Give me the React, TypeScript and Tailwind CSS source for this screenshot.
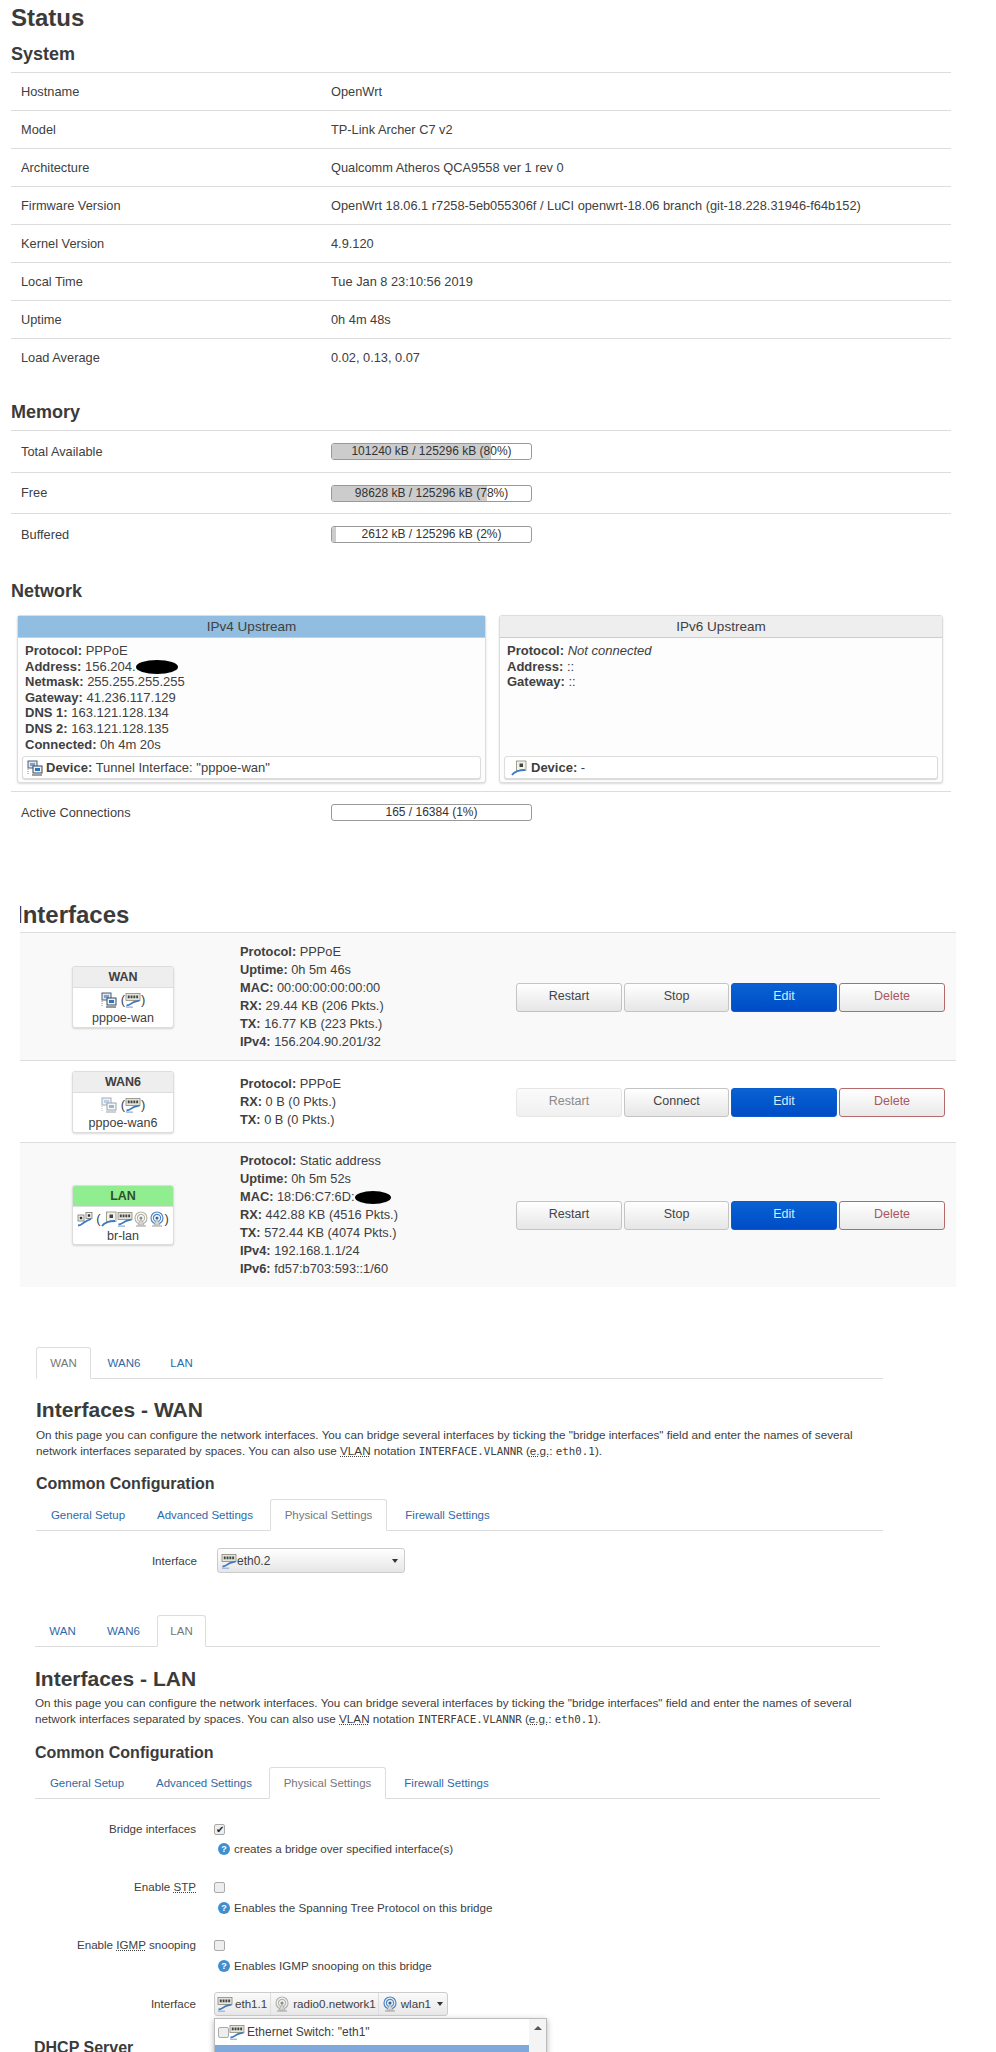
import React from 'react';

const Sw = () => (
  <svg viewBox="0 0 16 16" className="w-4 h-4 shrink-0">
    <rect x="1" y="1.5" width="14" height="7" fill="#e4e4da" stroke="#8a8a7a" strokeWidth="0.8" />
    <path d="M2.8 3.6h1.9v2.6H2.8zM5.6 3.6h1.9v2.6H5.6zM8.4 3.6h1.9v2.6H8.4zM11.2 3.6h1.9v2.6h-1.9z" fill="#444" />
    <path d="M1.5 13.5c3 0 4.5-2 6.5-3s4-1 6.5-2" fill="none" stroke="#3f78bd" strokeWidth="1.8" />
    <path d="M1 15.2h7" stroke="#8fb0d8" strokeWidth="1.2" />
  </svg>
);

const Port = () => (
  <svg viewBox="0 0 16 16" className="w-4 h-4 shrink-0">
    <rect x="5.5" y="1" width="9.5" height="9.5" fill="#f2f2ea" stroke="#8a8a7a" strokeWidth="0.8" />
    <rect x="8.5" y="3.5" width="3.5" height="3.5" fill="#444" />
    <path d="M1 15c2-3 4-3 6-4s3-1 7-1" fill="none" stroke="#3f78bd" strokeWidth="1.8" />
  </svg>
);

const Bridge = () => (
  <svg viewBox="0 0 16 16" className="w-4 h-4 shrink-0">
    <rect x="1" y="4" width="6" height="6" fill="#f2f2ea" stroke="#777" strokeWidth="0.8" />
    <rect x="9" y="1.5" width="6" height="6" fill="#f2f2ea" stroke="#777" strokeWidth="0.8" />
    <rect x="2.8" y="5.8" width="2.4" height="2.4" fill="#333" />
    <rect x="10.8" y="3.3" width="2.4" height="2.4" fill="#333" />
    <path d="M1 14.5c3 0 4-1.500 6-3s3-2 7-3.500" fill="none" stroke="#3f78bd" strokeWidth="1.8" />
  </svg>
);

const Tunnel = ({ faded = false }: { faded?: boolean }) => (
  <svg viewBox="0 0 16 16" className={`w-4 h-4 shrink-0 ${faded ? 'opacity-50' : ''}`}>
    <rect x="1" y="1" width="9" height="7" fill="#dfe6ee" stroke="#4a5c72" />
    <rect x="3" y="3" width="5" height="3" fill="#7fa3c9" />
    <rect x="6" y="6" width="9" height="7" fill="#eef2f6" stroke="#33485f" />
    <rect x="8" y="8" width="5" height="3" fill="#2f73b8" />
    <path d="M5 15h10" stroke="#777" strokeWidth="1.4" />
    <path d="M1 9v6" stroke="#888" strokeDasharray="1 1" />
  </svg>
);

const Wifi = ({ on = false }: { on?: boolean }) => {
  const c = on ? '#4f86c6' : '#b5b5ad';
  return (
    <svg viewBox="0 0 16 16" className="w-4 h-4 shrink-0">
      <circle cx="8" cy="7" r="6" fill="none" stroke={c} strokeWidth="1.2" />
      <circle cx="8" cy="7" r="3.600" fill="none" stroke={c} strokeWidth="1.2" />
      <circle cx="8" cy="7" r="1.600" fill={on ? '#2f66a8' : '#8c8c84'} />
      <path d="M5 14l3-6 3 6z" fill="#d8d8d0" stroke="#999" strokeWidth="0.5" />
      <path d="M3 15h10" stroke="#999" strokeWidth="1" />
    </svg>
  );
};

const Help = () => (
  <span className="w-3 h-3 rounded-full bg-[#3f8fd0] text-white text-[9px] leading-3 text-center font-bold shrink-0">?</span>
);

const Blob = ({ w, h }: { w: string; h: string }) => (
  <span className={`inline-block align-middle bg-black rounded-[50%] ${w} ${h}`} />
);

const Caret = () => <span className="w-0 h-0 shrink-0 border-x-[3px] border-t-[4px] border-x-transparent border-t-[#333]" />;

const sysRows = [
  ['Hostname', 'OpenWrt'],
  ['Model', 'TP-Link Archer C7 v2'],
  ['Architecture', 'Qualcomm Atheros QCA9558 ver 1 rev 0'],
  ['Firmware Version', 'OpenWrt 18.06.1 r7258-5eb055306f / LuCI openwrt-18.06 branch (git-18.228.31946-f64b152)'],
  ['Kernel Version', '4.9.120'],
  ['Local Time', 'Tue Jan 8 23:10:56 2019'],
  ['Uptime', '0h 4m 48s'],
  ['Load Average', '0.02, 0.13, 0.07'],
];

function Bar({ pct, text }: { pct: number; text: string }) {
  return (
    <div className="relative w-[201px] h-[17px] border border-[#999] rounded-[3px] bg-white overflow-hidden text-[12px] leading-[15px] text-center text-[#333]">
      <div className="absolute left-0 top-0 bottom-0 bg-[#ccc]" style={{ width: `${pct}%` }} />
      <span className="relative">{text}</span>
    </div>
  );
}

function BarRow({ label, pct, text, h }: { label: string; pct: number; text: string; h: string }) {
  return (
    <div className={`flex items-center border-t border-[#ddd] ${h}`}>
      <div className="w-[320px] pl-[10px]">{label}</div>
      <Bar pct={pct} text={text} />
    </div>
  );
}

function Upstream({ title, head, children, device, icon, w }: { title: string; head: string; children: React.ReactNode; device: React.ReactNode; icon: React.ReactNode; w: string }) {
  return (
    <div className={`flex flex-col h-[168px] border border-[#ddd] rounded-[3px] shadow-[0_1px_2px_rgba(0,0,0,0.15)] bg-[#fdfdfd] text-[13px] ${w}`}>
      <div className={`h-[22px] shrink-0 border-b border-[#ccc] leading-[21px] text-center text-[13.5px] ${head}`}>{title}</div>
      <div className="flex-1 pl-[7px] pt-[5px] leading-[15.6px]">{children}</div>
      <div className="flex items-center gap-[3px] h-[23px] mx-[4px] mb-[3px] pl-[4px] border border-[#ddd] rounded-[3px] bg-white shadow-[0_1px_1px_rgba(0,0,0,0.15)]">
        {icon}
        <span>{device}</span>
      </div>
    </div>
  );
}

const B = ({ children }: { children: React.ReactNode }) => <b className="font-bold">{children}</b>;

function Btn({ label, kind = 'plain', w = 'w-[106px]' }: { label: string; kind?: 'plain' | 'off' | 'edit' | 'del'; w?: string }) {
  const cls = {
    plain: 'border-[#c4c4c4] bg-gradient-to-b from-white to-[#e6e6e6] text-[#444]',
    off: 'border-[#e6e6e6] bg-gradient-to-b from-[#fbfbfb] to-[#f0f0f0] text-[#8a8a8a]',
    edit: 'border-[#0a5ccc] bg-gradient-to-b from-[#0a62d2] to-[#004cc6] text-[#d6ecff]',
    del: 'border-[#b46a6a] bg-gradient-to-b from-white to-[#e9e9e9] text-[#ad5560]',
  }[kind];
  return <div className={`h-[29px] ${w} border rounded-[3px] text-center leading-[25px] text-[12.5px] ${cls}`}>{label}</div>;
}

function Badge({ title, name, head = 'bg-[#eee] text-[#404040]', h, icons }: { title: string; name: string; head?: string; h: string; icons: React.ReactNode }) {
  return (
    <div className={`flex flex-col w-[102px] border border-[#ddd] rounded-[3px] bg-white shadow-[0_1px_2px_rgba(0,0,0,0.15)] overflow-hidden ${h}`}>
      <div className={`h-[21px] shrink-0 border-b border-[#ddd] text-center font-bold text-[12.5px] leading-[20px] ${head}`}>{title}</div>
      <div className="flex justify-center items-center h-[21px] mt-[2px] text-[13px]">{icons}</div>
      <div className="text-center text-[12.5px] leading-[15px]">{name}</div>
    </div>
  );
}

function IfaceRow({ h, bg = '', badge, lines, stop }: { h: string; bg?: string; badge: React.ReactNode; lines: [string, React.ReactNode][]; stop: 'stop' | 'connect' }) {
  return (
    <div className={`flex items-center border-t border-[#ddd] ${h} ${bg}`}>
      <div className="w-[220px] pl-[52px]">{badge}</div>
      <div className="w-[276px] text-[12.8px] leading-[18px]">
        {lines.map(([k, v]) => (
          <div key={k}><B>{k}:</B> {v}</div>
        ))}
      </div>
      <div className="flex gap-[2px] mt-[1px]">
        <Btn label="Restart" kind={stop === 'connect' ? 'off' : 'plain'} />
        <Btn label={stop === 'connect' ? 'Connect' : 'Stop'} w="w-[105px]" />
        <Btn label="Edit" kind="edit" />
        <Btn label="Delete" kind="del" />
      </div>
    </div>
  );
}

function TabBar({ items, active, className = '' }: { items: [string, string][]; active: string; className?: string }) {
  return (
    <div className={`flex h-[32px] border-b border-[#ddd] text-[11.5px] ${className}`}>
      {items.map(([name, w]) => (
        <div
          key={name}
          className={`${w} h-[32px] shrink-0 text-center ${name === active ? 'leading-[31px] border border-[#ddd] border-b-white rounded-t-[3px] bg-white text-[#777]' : 'leading-[33px] text-[#2f6aa8]'}`}
        >
          {name}
        </div>
      ))}
    </div>
  );
}

const subTabs: [string, string][] = [
  ['General Setup', 'w-[104px]'],
  ['Advanced Settings', 'w-[130px]'],
  ['Physical Settings', 'w-[117px]'],
  ['Firewall Settings', 'w-[121px]'],
];

function Intro({ name, top, gap }: { name: string; top: string; gap: string }) {
  return (
    <>
      <h2 className={`h-[30px] leading-[30px] text-[21px] font-bold text-[#3b3b3b] ${top}`}>Interfaces - {name}</h2>
      <p className={`text-[11.7px] leading-[16px] whitespace-nowrap ${gap}`}>
        On this page you can configure the network interfaces. You can bridge several interfaces by ticking the "bridge interfaces" field and enter the names of several
        <br />
        network interfaces separated by spaces. You can also use <span className="underline decoration-dotted">VLAN</span> notation{' '}
        <code className="font-['DejaVu_Sans_Mono',monospace] text-[10.8px]">INTERFACE.VLANNR</code> (<span className="underline decoration-dotted">e.g.</span>:{' '}
        <code className="font-['DejaVu_Sans_Mono',monospace] text-[10.8px]">eth0.1</code>).
      </p>
    </>
  );
}

function Check({ checked = false }: { checked?: boolean }) {
  return (
    <div className="w-[11px] h-[11px] border border-[#aaa] rounded-[2px] bg-[#eee] text-[#222] text-[10px] leading-[9px] text-center">
      {checked ? '✔' : ''}
    </div>
  );
}

function Flag({ label, help, checked, top, helpTop }: { label: React.ReactNode; help: string; checked?: boolean; top: string; helpTop: string }) {
  return (
    <>
      <div className={`flex items-center h-[20px] ${top}`}>
        <div className="w-[161px] text-right text-[11.6px]">{label}</div>
        <div className="ml-[18px]"><Check checked={checked} /></div>
      </div>
      <div className={`flex items-center gap-[4px] h-[20px] pl-[183px] text-[11.6px] ${helpTop}`}>
        <Help />
        <span>{help}</span>
      </div>
    </>
  );
}

export default function App() {
  return (
    <div className="relative h-[2052px] overflow-hidden bg-white text-[#404040] text-[12.8px] font-['Liberation_Sans',Arial,sans-serif]">
      <div className="ml-[11px] w-[940px]">
        <h1 className="h-[36px] leading-[36px] text-[24px] font-bold text-[#3b3b3b]">Status</h1>
        <h2 className="h-[36px] leading-[36px] text-[18px] font-bold text-[#3b3b3b]">System</h2>
        {sysRows.map(([k, v]) => (
          <div key={k} className="flex items-center h-[38px] pt-[1px] border-t border-[#ddd]">
            <div className="w-[320px] pl-[10px]">{k}</div>
            <div>{v}</div>
          </div>
        ))}

        <h2 className="mt-[18px] h-[36px] leading-[36px] text-[18px] font-bold text-[#3b3b3b]">Memory</h2>
        <BarRow label="Total Available" pct={80} text="101240 kB / 125296 kB (80%)" h="h-[42px]" />
        <BarRow label="Free" pct={78} text="98628 kB / 125296 kB (78%)" h="h-[41px]" />
        <BarRow label="Buffered" pct={2} text="2612 kB / 125296 kB (2%)" h="h-[42px]" />

        <h2 className="mt-[18px] h-[36px] leading-[36px] text-[18px] font-bold text-[#3b3b3b]">Network</h2>
        <div className="flex gap-[13px] mt-[6px] ml-[6px]">
          <Upstream
            title="IPv4 Upstream"
            head="bg-[#90bde0]"
            w="w-[469px]"
            icon={<Tunnel />}
            device={<><B>Device:</B> Tunnel Interface: "pppoe-wan"</>}
          >
            <div><B>Protocol:</B> PPPoE</div>
            <div><B>Address:</B> 156.204.<Blob w="w-[42px]" h="h-[14px]" /></div>
            <div><B>Netmask:</B> 255.255.255.255</div>
            <div><B>Gateway:</B> 41.236.117.129</div>
            <div><B>DNS 1:</B> 163.121.128.134</div>
            <div><B>DNS 2:</B> 163.121.128.135</div>
            <div><B>Connected:</B> 0h 4m 20s</div>
          </Upstream>
          <Upstream
            title="IPv6 Upstream"
            head="bg-[#eee]"
            w="w-[444px]"
            icon={<span className="ml-[2px] mr-[1px]"><Port /></span>}
            device={<><B>Device:</B> -</>}
          >
            <div><B>Protocol:</B> <em>Not connected</em></div>
            <div><B>Address:</B> ::</div>
            <div><B>Gateway:</B> ::</div>
          </Upstream>
        </div>
        <div className="mt-[8px]">
          <BarRow label="Active Connections" pct={0} text="165 / 16384 (1%)" h="h-[42px]" />
        </div>
      </div>

      <div className="ml-[20px] w-[936px] mt-[65px]">
        <div className="h-[34px] overflow-hidden">
          <h2 className="-ml-[4px] leading-[34px] text-[24px] font-bold text-[#3b3b3b]">Interfaces</h2>
        </div>
        <IfaceRow
          h="h-[128px]"
          bg="bg-[#f9f9f9]"
          stop="stop"
          badge={<Badge title="WAN" name="pppoe-wan" h="h-[62px]" icons={<><Tunnel /><span className="ml-[4px]">(</span><Sw /><span>)</span></>} />}
          lines={[
            ['Protocol', 'PPPoE'],
            ['Uptime', '0h 5m 46s'],
            ['MAC', '00:00:00:00:00:00'],
            ['RX', '29.44 KB (206 Pkts.)'],
            ['TX', '16.77 KB (223 Pkts.)'],
            ['IPv4', '156.204.90.201/32'],
          ]}
        />
        <IfaceRow
          h="h-[82px]"
          stop="connect"
          badge={<Badge title="WAN6" name="pppoe-wan6" h="h-[62px]" icons={<><Tunnel faded /><span className="ml-[4px]">(</span><Sw /><span>)</span></>} />}
          lines={[
            ['Protocol', 'PPPoE'],
            ['RX', '0 B (0 Pkts.)'],
            ['TX', '0 B (0 Pkts.)'],
          ]}
        />
        <IfaceRow
          h="h-[145px]"
          bg="bg-[#f9f9f9]"
          stop="stop"
          badge={
            <Badge
              title="LAN"
              name="br-lan"
              head="bg-[#90ee90] text-[#2f4f2f]"
              h="h-[60px]"
              icons={<><Bridge /><span className="ml-[3px]">(</span><Port /><Sw /><Wifi /><Wifi on /><span>)</span></>}
            />
          }
          lines={[
            ['Protocol', 'Static address'],
            ['Uptime', '0h 5m 52s'],
            ['MAC', <>18:D6:C7:6D:<Blob w="w-[36px]" h="h-[13px]" /></>],
            ['RX', '442.88 KB (4516 Pkts.)'],
            ['TX', '572.44 KB (4074 Pkts.)'],
            ['IPv4', '192.168.1.1/24'],
            ['IPv6', 'fd57:b703:593::1/60'],
          ]}
        />
      </div>

      <div className="ml-[36px] w-[847px] mt-[60px]">
        <TabBar items={[['WAN', 'w-[55px]'], ['WAN6', 'w-[66px]'], ['LAN', 'w-[49px]']]} active="WAN" />
        <Intro name="WAN" top="mt-[16px]" gap="mt-[2px]" />
        <h3 className="mt-[12px] h-[24px] leading-[24px] text-[16px] font-bold text-[#3b3b3b]">Common Configuration</h3>
        <TabBar items={subTabs} active="Physical Settings" className="mt-[3px]" />
        <div className="flex items-center mt-[17px]">
          <div className="w-[161px] text-right text-[11.6px]">Interface</div>
          <div className="ml-[20px] flex items-center justify-between w-[188px] h-[25px] pl-[3px] pr-[6px] border border-[#ccc] rounded-[3px] bg-gradient-to-b from-white to-[#e6e6e6] text-[12px]">
            <div className="flex items-center"><Sw />eth0.2</div>
            <Caret />
          </div>
        </div>
      </div>

      <div className="ml-[35px] w-[845px] mt-[42px]">
        <TabBar items={[['WAN', 'w-[55px]'], ['WAN6', 'w-[67px]'], ['LAN', 'w-[49px]']]} active="LAN" />
        <Intro name="LAN" top="mt-[17px]" gap="mt-[1px]" />
        <h3 className="mt-[13px] h-[24px] leading-[24px] text-[16px] font-bold text-[#3b3b3b]">Common Configuration</h3>
        <TabBar items={subTabs} active="Physical Settings" className="mt-[2px]" />
        <Flag label="Bridge interfaces" checked help="creates a bridge over specified interface(s)" top="mt-[20px]" helpTop="" />
        <Flag label={<>Enable <span className="underline decoration-dotted">STP</span></>} help="Enables the Spanning Tree Protocol on this bridge" top="mt-[18px]" helpTop="mt-[1px]" />
        <Flag label={<>Enable <span className="underline decoration-dotted">IGMP</span> snooping</>} help="Enables IGMP snooping on this bridge" top="mt-[17px]" helpTop="mt-[1px]" />
        <div className="relative flex items-center mt-[16px]">
          <div className="w-[161px] text-right text-[11.6px]">Interface</div>
          <div className="ml-[18px] flex items-center h-[24px] border border-[#ccc] rounded-[3px] bg-gradient-to-b from-[#fafafa] to-[#e8e8e8] text-[11.6px] whitespace-nowrap">
            <div className="flex items-center gap-[2px] h-full pl-[2px] pr-[3px] border-r border-[#ddd]"><Sw />eth1.1</div>
            <div className="flex items-center gap-[3px] h-full pl-[3px] pr-[2px] border-r border-[#ddd]"><Wifi />radio0.network1</div>
            <div className="flex items-center gap-[3px] h-full pl-[3px]"><Wifi on />wlan1</div>
            <span className="ml-[6px] mr-[4px] flex"><Caret /></span>
          </div>
          <div className="absolute left-[179px] top-[26px] flex w-[333px] h-[60px] border border-[#bbb] bg-white shadow-[0_2px_6px_rgba(0,0,0,0.3)] z-10">
            <div className="flex-1">
              <div className="flex items-center h-[26px] pl-[3px] text-[12px]">
                <div className="w-[11px] h-[11px] border border-[#aaa] rounded-[2px] bg-[#eee]" />
                <Sw />
                <span className="ml-[2px]">Ethernet Switch: "eth1"</span>
              </div>
              <div className="h-[34px] bg-[#7fa9dc]" />
            </div>
            <div className="flex justify-center w-[17px] pt-[7px] bg-[#f4f4f4]">
              <span className="w-0 h-0 border-x-[4px] border-b-[4px] border-x-transparent border-b-[#555]" />
            </div>
          </div>
        </div>
        <h3 className="-ml-[1px] mt-[20px] h-[24px] leading-[24px] text-[16px] font-bold text-[#3b3b3b]">DHCP Server</h3>
      </div>
    </div>
  );
}
